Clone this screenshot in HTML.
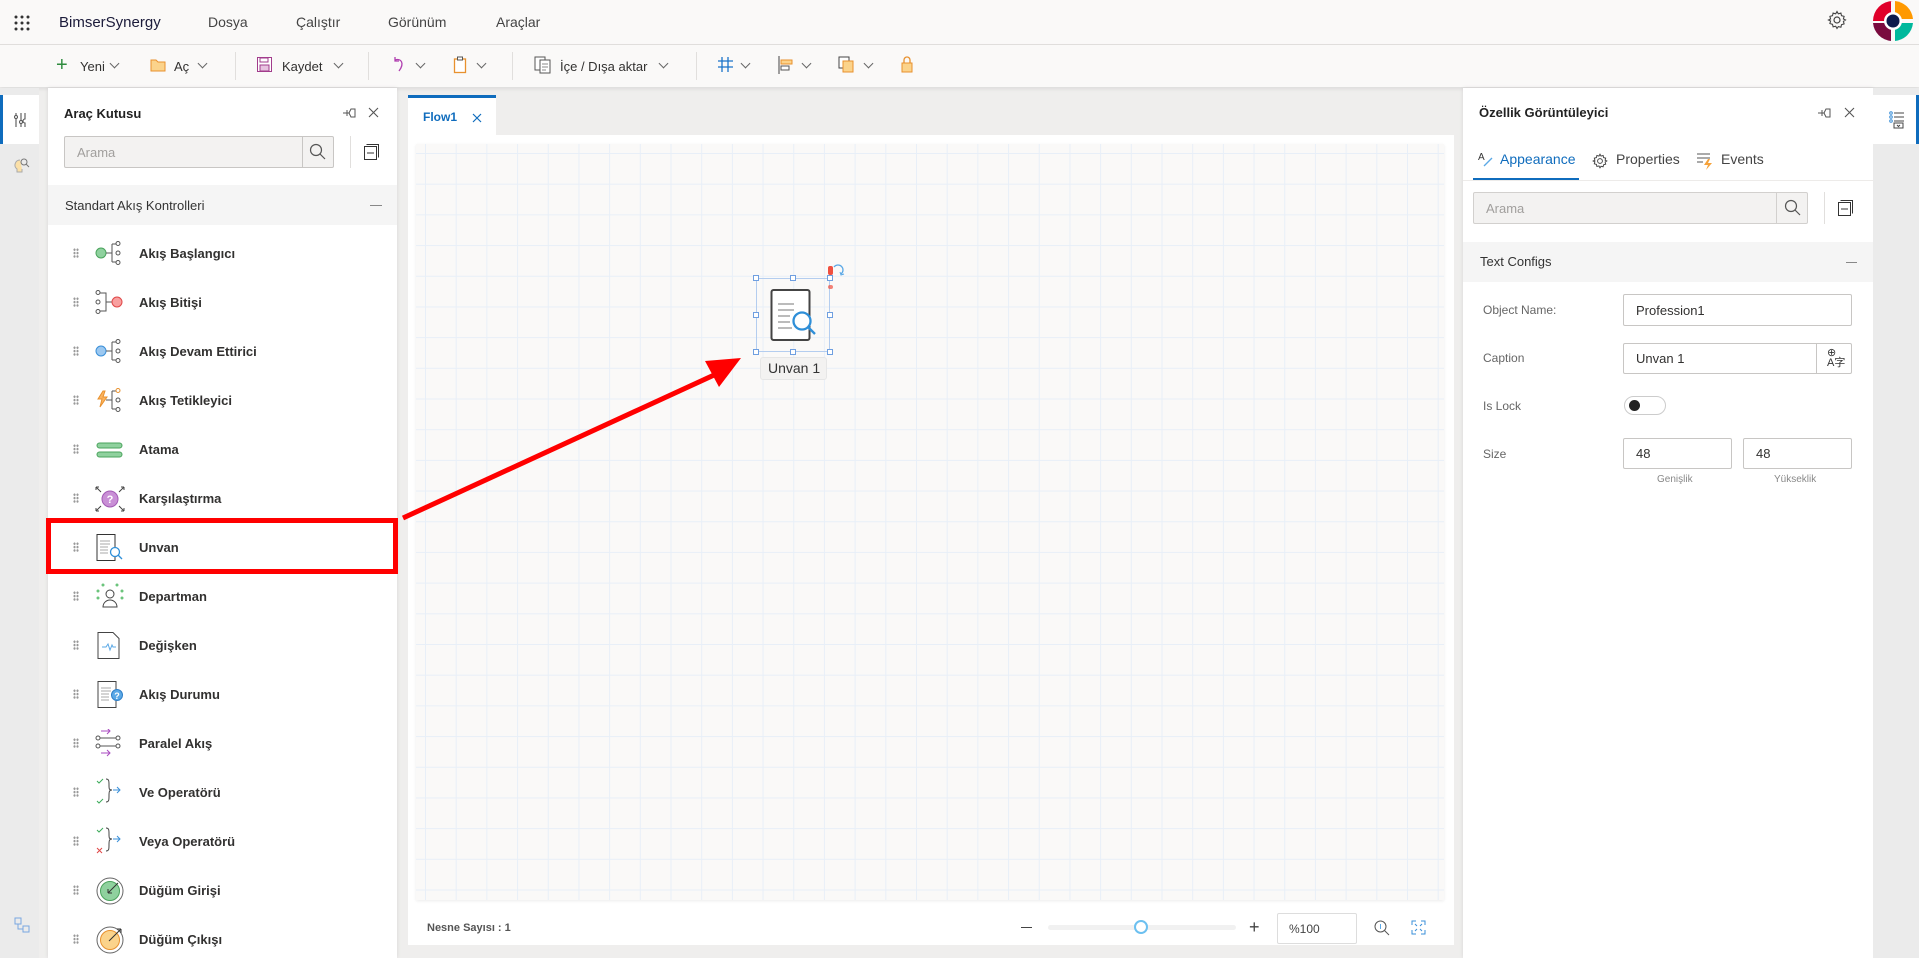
<!DOCTYPE html>
<html><head><meta charset="utf-8"><style>
*{box-sizing:border-box;margin:0;padding:0}
body{width:1919px;height:958px;overflow:hidden;background:#efeeed;font-family:"Liberation Sans",sans-serif;font-size:13px;color:#323130;position:relative}
.abs{position:absolute}
.top{left:0;top:0;width:1919px;height:45px;background:#faf9f8;border-bottom:1px solid #e1dfdd}
.tb{left:0;top:45px;width:1919px;height:42px;background:#faf9f8;box-shadow:0 2px 4px rgba(0,0,0,.08)}
.t{position:absolute;white-space:nowrap}
.sep{position:absolute;top:52px;width:1px;height:28px;background:#e1dfdd}
.chev{position:absolute;width:7px;height:7px;border-right:1px solid #666;border-bottom:1px solid #666;transform:rotate(45deg)}
.panel{background:#fff}
.row .dr{position:absolute;left:73px;width:6px;height:10px;background-image:radial-gradient(circle,#999 1px,transparent 1.3px);background-size:3px 3.4px}
.lbl{font-weight:bold;font-size:13px;color:#323130}
.inp{position:absolute;border:1px solid #c8c6c4;border-radius:2px;background:#fff;font-size:13px;padding-left:12px;display:flex;align-items:center}
.grid{background-color:#faf9f8;background-image:linear-gradient(#e8eff8 1px,transparent 1px),linear-gradient(90deg,#e8eff8 1px,transparent 1px);background-size:30.7px 30.7px;background-position:9px 9px}
</style></head><body>
<div class="abs top"></div>
<svg class="abs" style="left:14px;top:15px" width="16" height="16"><g fill="#333"><circle cx="2" cy="2" r="1.5"/><circle cx="8" cy="2" r="1.5"/><circle cx="14" cy="2" r="1.5"/><circle cx="2" cy="8" r="1.5"/><circle cx="8" cy="8" r="1.5"/><circle cx="14" cy="8" r="1.5"/><circle cx="2" cy="14" r="1.5"/><circle cx="8" cy="14" r="1.5"/><circle cx="14" cy="14" r="1.5"/></g></svg>
<div class="t" style="left:59px;top:14px;font-size:15px;color:#1b1b3a">BimserSynergy</div>
<div class="t" style="left:208px;top:14px;font-size:14px;color:#444">Dosya</div>
<div class="t" style="left:296px;top:14px;font-size:14px;color:#444">Çalıştır</div>
<div class="t" style="left:388px;top:14px;font-size:14px;color:#444">Görünüm</div>
<div class="t" style="left:496px;top:14px;font-size:14px;color:#444">Araçlar</div>
<svg class="abs" style="left:1827px;top:10px" width="20" height="20" viewBox="0 0 20 20"><circle cx="10" cy="10" r="3" fill="none" stroke="#444" stroke-width="1.2"/><path d="M10 1.5l1.3 2.3 2.6-.7.6 2.6 2.6.7-.7 2.6 2.1 1-2.1 1.4.7 2.5-2.6.8-.6 2.5-2.6-.6L10 18.5l-1.3-2.3-2.6.6-.6-2.5-2.6-.8.7-2.5L1.5 10l2.1-1-.7-2.6 2.6-.7.6-2.6 2.6.7z" fill="none" stroke="#444" stroke-width="1.1"/></svg>
<svg class="abs" style="left:1872px;top:0" width="42" height="42" viewBox="0 0 42 42"><path d="M21 1A20 20 0 0 0 1 21h18V1z" fill="#e0002a"/><path d="M23 1v18h18A20 20 0 0 0 23 1z" fill="#ff9900"/><path d="M1 23a20 20 0 0 0 18 18V23z" fill="#7a0b3f"/><path d="M23 23v18a20 20 0 0 0 18-18z" fill="#00b89c"/><circle cx="21" cy="21" r="9" fill="#fff"/><circle cx="21" cy="21" r="6.5" fill="#0d1b4c"/></svg>
<div class="abs tb"></div>
<div class="t" style="left:56px;top:54px;font-size:20px;color:#2e8b3e;font-weight:300">+</div>
<div class="t" style="left:80px;top:59px;font-size:13px">Yeni</div><div class="chev" style="left:111px;top:60px"></div>
<svg class="abs" style="left:150px;top:57px" width="16" height="15"><path d="M1 3h5l2 2h7v9H1z" fill="#fbd38b" stroke="#e8912e"/></svg>
<div class="t" style="left:174px;top:59px">Aç</div><div class="chev" style="left:199px;top:60px"></div>
<div class="sep" style="left:235px"></div>
<svg class="abs" style="left:257px;top:57px" width="15" height="15"><rect x=".5" y=".5" width="14" height="14" fill="#fff" stroke="#a23c8c"/><rect x="3" y="8" width="9" height="6" fill="#e7c3e0" stroke="#a23c8c"/><rect x="3" y="1" width="8" height="4" fill="none" stroke="#a23c8c"/></svg>
<div class="t" style="left:282px;top:59px">Kaydet</div><div class="chev" style="left:335px;top:60px"></div>
<div class="sep" style="left:368px"></div>
<svg class="abs" style="left:392px;top:56px" width="14" height="18"><path d="M3 4c6-2 10 3 4 11" fill="none" stroke="#b03fb0" stroke-width="1.3"/><path d="M3 1v4h4" fill="none" stroke="#b03fb0" stroke-width="1.3"/></svg>
<div class="chev" style="left:417px;top:60px"></div>
<svg class="abs" style="left:453px;top:56px" width="14" height="18"><rect x="1.5" y="3" width="11" height="13.5" fill="#fff" stroke="#e8912e" stroke-width="1.3"/><rect x="4.5" y="1" width="5" height="3" fill="#fff" stroke="#555"/></svg>
<div class="chev" style="left:478px;top:60px"></div>
<div class="sep" style="left:512px"></div>
<svg class="abs" style="left:534px;top:56px" width="17" height="18"><rect x="1" y="1" width="10" height="13" fill="#fff" stroke="#555"/><rect x="6" y="4" width="10" height="13" fill="#fff" stroke="#555"/><path d="M8 8h6M8 11h6M8 14h4" stroke="#888"/></svg>
<div class="t" style="left:560px;top:59px">İçe / Dışa aktar</div><div class="chev" style="left:660px;top:60px"></div>
<div class="sep" style="left:696px"></div>
<svg class="abs" style="left:718px;top:57px" width="15" height="15"><path d="M4 0v15M10 0v15M0 4h15M0 10h15" stroke="#1a73c9" stroke-width="1.3"/></svg>
<div class="chev" style="left:742px;top:60px"></div>
<svg class="abs" style="left:778px;top:56px" width="16" height="18"><path d="M1 0v18" stroke="#444"/><rect x="3" y="4" width="11" height="4" fill="#fbd38b" stroke="#e8912e"/><rect x="3" y="10" width="8" height="4" fill="#fff" stroke="#555"/></svg>
<div class="chev" style="left:803px;top:60px"></div>
<svg class="abs" style="left:838px;top:56px" width="17" height="18"><rect x="1" y="1" width="10" height="11" fill="#fff" stroke="#444"/><rect x="5" y="5" width="10" height="11" fill="#fbd38b" stroke="#e8912e"/></svg>
<div class="chev" style="left:865px;top:60px"></div>
<svg class="abs" style="left:901px;top:55px" width="12" height="18"><path d="M3 8V5a3 3 0 0 1 6 0v3" fill="none" stroke="#e8912e" stroke-width="1.3"/><rect x="1" y="8" width="10" height="9" fill="#fbd38b" stroke="#e8912e"/></svg>

<div class="abs" style="left:0;top:88px;width:39px;height:870px;background:#ebebeb"></div>
<div class="abs" style="left:0;top:95px;width:39px;height:49px;background:#fff;border-left:3px solid #0f6cbd"></div>
<svg class="abs" style="left:14px;top:112px" width="14" height="16"><path d="M2 1v14M7 1v14M11 1v6a2 2 0 0 0 0 4v4" fill="none" stroke="#555" stroke-width="1.1"/><circle cx="2" cy="5" r="1.5" fill="#fff" stroke="#555"/><circle cx="7" cy="10" r="1.5" fill="#fff" stroke="#555"/></svg>
<svg class="abs" style="left:14px;top:157px" width="16" height="18"><path d="M6 3a5 5 0 0 0-3 9v3h5v-3" fill="#fbe0a8" stroke="#aaa"/><circle cx="10" cy="5" r="3" fill="none" stroke="#777"/><path d="M12 7l3 3" stroke="#777"/></svg>
<svg class="abs" style="left:14px;top:917px" width="16" height="16"><rect x="1" y="1" width="6" height="6" fill="none" stroke="#7aa7e0"/><rect x="9" y="9" width="6" height="6" fill="none" stroke="#7aa7e0"/><path d="M4 7v5h5" fill="none" stroke="#7aa7e0"/></svg>

<div class="abs panel" style="left:48px;top:88px;width:349px;height:870px;box-shadow:0 0 4px rgba(0,0,0,.1)"></div>
<div class="t" style="left:64px;top:106px;font-size:13px;font-weight:600;color:#222">Araç Kutusu</div>
<svg class="abs" style="left:343px;top:107px" width="14" height="12"><path d="M0 6h4M4 3v6M4 6h2l2-4h4v8H8L6 6" fill="none" stroke="#555"/></svg>
<svg class="abs" style="left:368px;top:107px" width="11" height="11"><path d="M1 1l9 9M10 1l-9 9" stroke="#555" stroke-width="1.1"/></svg>
<div class="inp" style="left:64px;top:136px;width:270px;height:32px;background:#f3f2f1;color:#a19f9d">Arama</div>
<div class="abs" style="left:302px;top:136px;width:1px;height:32px;background:#c8c6c4"></div>
<svg class="abs" style="left:309px;top:143px" width="17" height="17"><circle cx="7" cy="7" r="5.5" fill="none" stroke="#555" stroke-width="1.2"/><path d="M11 11l5 5" stroke="#555" stroke-width="1.2"/></svg>
<div class="abs" style="left:350px;top:136px;width:1px;height:32px;background:#e1dfdd"></div>
<svg class="abs" style="left:364px;top:144px" width="15" height="16"><rect x=".5" y="2.5" width="12" height="13" fill="none" stroke="#333"/><path d="M2.5 .5h12v13" fill="none" stroke="#333"/><path d="M3 9h7" stroke="#333"/></svg>
<div class="abs" style="left:48px;top:185px;width:349px;height:40px;background:#f5f5f5"></div>
<div class="t" style="left:65px;top:198px;font-size:13px;color:#333">Standart Akış Kontrolleri</div>
<div class="abs" style="left:370px;top:205px;width:12px;height:1px;background:#888"></div>

<div class="row">
<div class="dr" style="top:248px"></div><div class="dr" style="top:297px"></div><div class="dr" style="top:346px"></div><div class="dr" style="top:395px"></div><div class="dr" style="top:444px"></div><div class="dr" style="top:493px"></div><div class="dr" style="top:542px"></div><div class="dr" style="top:591px"></div><div class="dr" style="top:640px"></div><div class="dr" style="top:689px"></div><div class="dr" style="top:738px"></div><div class="dr" style="top:787px"></div><div class="dr" style="top:836px"></div><div class="dr" style="top:885px"></div><div class="dr" style="top:934px"></div>
</div>
<div class="t lbl" style="left:139px;top:246px">Akış Başlangıcı</div>
<div class="t lbl" style="left:139px;top:295px">Akış Bitişi</div>
<div class="t lbl" style="left:139px;top:344px">Akış Devam Ettirici</div>
<div class="t lbl" style="left:139px;top:393px">Akış Tetikleyici</div>
<div class="t lbl" style="left:139px;top:442px">Atama</div>
<div class="t lbl" style="left:139px;top:491px">Karşılaştırma</div>
<div class="t lbl" style="left:139px;top:540px">Unvan</div>
<div class="t lbl" style="left:139px;top:589px">Departman</div>
<div class="t lbl" style="left:139px;top:638px">Değişken</div>
<div class="t lbl" style="left:139px;top:687px">Akış Durumu</div>
<div class="t lbl" style="left:139px;top:736px">Paralel Akış</div>
<div class="t lbl" style="left:139px;top:785px">Ve Operatörü</div>
<div class="t lbl" style="left:139px;top:834px">Veya Operatörü</div>
<div class="t lbl" style="left:139px;top:883px">Düğüm Girişi</div>
<div class="t lbl" style="left:139px;top:932px">Düğüm Çıkışı</div>
<svg class="abs" style="left:94px;top:240px" width="32" height="32" viewBox="0 0 32 32" fill="none" stroke="#555" stroke-width="1">
<circle cx="7" cy="13" r="5" fill="#8fd19e" stroke="#4aa35c"/><path d="M12 13h6M18 13V4M18 13v9" /><circle cx="24" cy="3.5" r="2"/><circle cx="24" cy="13" r="2"/><circle cx="24" cy="22.5" r="2"/><path d="M18 4h4M18 22h4"/></svg>
<svg class="abs" style="left:94px;top:289px" width="32" height="32" viewBox="0 0 32 32" fill="none" stroke="#555"><circle cx="4" cy="3.5" r="2"/><circle cx="4" cy="13" r="2"/><circle cx="4" cy="22.5" r="2"/><path d="M6 4h6v18H6M12 13h6"/><circle cx="23" cy="13" r="5" fill="#f8a0a0" stroke="#e04848"/></svg>
<svg class="abs" style="left:94px;top:338px" width="32" height="32" viewBox="0 0 32 32" fill="none" stroke="#555"><circle cx="7" cy="13" r="5" fill="#9cc8f0" stroke="#3a8fd8"/><path d="M12 13h6M18 4v18M18 4h4M18 22h4"/><circle cx="24" cy="3.5" r="2"/><circle cx="24" cy="13" r="2"/><circle cx="24" cy="22.5" r="2"/></svg>
<svg class="abs" style="left:94px;top:387px" width="32" height="32" viewBox="0 0 32 32" fill="none" stroke="#555"><path d="M9 4l-5 8h4l-2 8 7-10H9l2-6z" fill="#fbb35e" stroke="#e8912e"/><path d="M12 13h6M18 4v18M18 4h4M18 22h4"/><circle cx="24" cy="3.5" r="2" stroke="#e8912e"/><circle cx="24" cy="13" r="2"/><circle cx="24" cy="22.5" r="2"/></svg>
<svg class="abs" style="left:94px;top:436px" width="32" height="32" viewBox="0 0 32 32"><rect x="3" y="7" width="25" height="5" rx="2.5" fill="#8fd19e" stroke="#4aa35c"/><rect x="3" y="16" width="25" height="5" rx="2.5" fill="#8fd19e" stroke="#4aa35c"/></svg>
<svg class="abs" style="left:94px;top:485px" width="32" height="32" viewBox="0 0 32 32" fill="none" stroke="#444"><circle cx="16" cy="14" r="8" fill="#c98fd6" stroke="#a25ab5"/><text x="16" y="18" font-size="11" fill="#fff" stroke="none" text-anchor="middle" font-weight="bold" font-family="Liberation Sans">?</text><path d="M2 2l5 5M2 2h3M2 2v3M30 2l-5 5M30 2h-3M30 2v3M2 26l5-5M2 26h3M2 26v-3M30 26l-5-5M30 26h-3M30 26v-3"/></svg>
<svg class="abs" style="left:94px;top:533px" width="32" height="32" viewBox="0 0 32 32" fill="none"><path d="M3 1.5h18v26H3z" fill="#fff" stroke="#333"/><path d="M6 8h10M6 11h10M6 14h8M6 17h8M6 20h8" stroke="#aaa"/><circle cx="21" cy="19" r="4.5" fill="#fff" stroke="#2f8fd8" stroke-width="1.3"/><path d="M24 22l4 4" stroke="#2f8fd8" stroke-width="1.3"/></svg>
<svg class="abs" style="left:94px;top:582px" width="32" height="32" viewBox="0 0 32 32" fill="none"><circle cx="16" cy="12" r="4" stroke="#444"/><path d="M9 25a7 7 0 0 1 14 0z" stroke="#444"/><g fill="#6bc47c"><circle cx="9" cy="3" r="1.5"/><circle cx="23" cy="3" r="1.5"/><circle cx="4" cy="9" r="1.5"/><circle cx="28" cy="9" r="1.5"/><circle cx="4" cy="16" r="1.5"/><circle cx="28" cy="16" r="1.5"/></g></svg>
<svg class="abs" style="left:94px;top:631px" width="32" height="32" viewBox="0 0 32 32" fill="none"><path d="M4 1.5h15l6 6v20H4z" fill="#fff" stroke="#444"/><path d="M8 16h4l2-3 2 6 2-5 1 2h3" stroke="#5aa8e6"/></svg>
<svg class="abs" style="left:94px;top:680px" width="32" height="32" viewBox="0 0 32 32" fill="none"><path d="M4 1.5h18v26H4z" fill="#fff" stroke="#444"/><path d="M7 8h10M7 11h10M7 14h8M7 17h8M7 20h8" stroke="#aaa"/><circle cx="23" cy="15" r="5.5" fill="#5aa8e6" stroke="#2f7fc8"/><text x="23" y="19" font-size="9" fill="#fff" text-anchor="middle" font-weight="bold" font-family="Liberation Sans">?</text></svg>
<svg class="abs" style="left:94px;top:729px" width="32" height="32" viewBox="0 0 32 32" fill="none"><path d="M7 2h9M13 -1l3 3-3 3M7 24h9M13 21l3 3-3 3" stroke="#a94ac0"/><circle cx="4" cy="9" r="2" stroke="#555"/><circle cx="24" cy="9" r="2" stroke="#555"/><circle cx="4" cy="17" r="2" stroke="#555"/><circle cx="24" cy="17" r="2" stroke="#555"/><path d="M6 9h16M6 17h16" stroke="#555"/></svg>
<svg class="abs" style="left:94px;top:778px" width="32" height="32" viewBox="0 0 32 32" fill="none"><path d="M3 3l2 2 4-4M3 23l2 2 4-4" stroke="#3cab5a"/><path d="M12 1c3 0 3 2 3 6s0 5 3 5c-3 0-3 2-3 6s0 6-3 6" stroke="#444"/><path d="M19 12h7M23 9l3 3-3 3" stroke="#3a8fd8"/></svg>
<svg class="abs" style="left:94px;top:827px" width="32" height="32" viewBox="0 0 32 32" fill="none"><path d="M3 3l2 2 4-4" stroke="#3cab5a"/><path d="M3 21l5 5M8 21l-5 5" stroke="#e04848"/><path d="M12 1c3 0 3 2 3 6s0 5 3 5c-3 0-3 2-3 6s0 6-3 6" stroke="#444"/><path d="M19 12h7M23 9l3 3-3 3" stroke="#3a8fd8"/></svg>
<svg class="abs" style="left:94px;top:876px" width="32" height="32" viewBox="0 0 32 32" fill="none"><circle cx="16" cy="15" r="13" fill="#fff" stroke="#666"/><circle cx="16" cy="15" r="9.5" fill="#8fd19e" stroke="#4aa35c"/><path d="M14 17l10-10M14 17v-4M14 17h4" stroke="#333"/></svg>
<svg class="abs" style="left:94px;top:925px" width="32" height="32" viewBox="0 0 32 32" fill="none"><circle cx="16" cy="15" r="13" fill="#fff" stroke="#666"/><circle cx="16" cy="15" r="9.5" fill="#fbd38b" stroke="#e8912e"/><path d="M15 16l12-12M27 4h-4M27 4v4" stroke="#333"/></svg>
<div class="abs" style="left:46px;top:518px;width:352px;height:56px;border:5px solid #f00"></div>

<div class="abs" style="left:408px;top:95px;width:88px;height:40px;background:#fff;border-top:3px solid #0f6cbd"></div>
<div class="t" style="left:423px;top:110px;font-size:12px;font-weight:bold;color:#0f6cbd">Flow1</div>
<svg class="abs" style="left:472px;top:113px" width="10" height="10"><path d="M1 1l8 8M9 1l-8 8" stroke="#0f6cbd" stroke-width="1.2"/></svg>
<div class="abs" style="left:408px;top:135px;width:1046px;height:773px;background:#fff"></div>
<div class="abs grid" style="left:416px;top:144px;width:1028px;height:756px;box-shadow:0 1px 3px rgba(0,0,0,.08)"></div>
<div class="abs" style="left:408px;top:908px;width:1046px;height:37px;background:#fff"></div>
<div class="t" style="left:427px;top:922px;font-size:11px;font-weight:bold;color:#555">Nesne Sayısı : 1</div>
<div class="abs" style="left:1021px;top:927px;width:11px;height:1px;background:#444"></div>
<div class="abs" style="left:1048px;top:925px;width:188px;height:5px;background:#f1f1f1;border-radius:3px"></div>
<div class="abs" style="left:1134px;top:920px;width:14px;height:14px;border:2px solid #6cc0f0;border-radius:50%;background:#fff"></div>
<div class="t" style="left:1249px;top:917px;font-size:18px;color:#444;font-weight:300">+</div>
<div class="inp" style="left:1277px;top:913px;width:80px;height:31px;border-color:#ddd;padding-left:11px;color:#444;font-size:12px">%100</div>
<svg class="abs" style="left:1374px;top:920px" width="16" height="16"><circle cx="6.5" cy="6.5" r="5.5" fill="none" stroke="#555"/><path d="M10.5 10.5l4.5 4.5" stroke="#555"/><path d="M6.5 4v5" stroke="#5aa8e6"/></svg>
<svg class="abs" style="left:1411px;top:920px" width="15" height="15" fill="none" stroke="#3a8fd8"><path d="M1 5V1h4M10 1h4v4M14 10v4h-4M5 14H1v-4"/><path d="M4 4l2 2M11 4l-2 2M4 11l2-2M11 11l-2-2"/></svg>
<div class="abs" style="left:756px;top:278px;width:74px;height:74px;border:1px solid #b4cdef"></div>
<div class="abs" style="left:753px;top:275px;width:6px;height:6px;border:1px solid #6f9fe0;background:#fff"></div>
<div class="abs" style="left:790px;top:275px;width:6px;height:6px;border:1px solid #6f9fe0;background:#fff"></div>
<div class="abs" style="left:827px;top:275px;width:6px;height:6px;border:1px solid #6f9fe0;background:#fff"></div>
<div class="abs" style="left:753px;top:312px;width:6px;height:6px;border:1px solid #6f9fe0;background:#fff"></div>
<div class="abs" style="left:827px;top:312px;width:6px;height:6px;border:1px solid #6f9fe0;background:#fff"></div>
<div class="abs" style="left:753px;top:349px;width:6px;height:6px;border:1px solid #6f9fe0;background:#fff"></div>
<div class="abs" style="left:790px;top:349px;width:6px;height:6px;border:1px solid #6f9fe0;background:#fff"></div>
<div class="abs" style="left:827px;top:349px;width:6px;height:6px;border:1px solid #6f9fe0;background:#fff"></div>
<div class="abs" style="left:828px;top:266px;width:5px;height:9px;background:#f05040;border-radius:2px"></div>
<div class="abs" style="left:828px;top:285px;width:5px;height:4px;background:#f05040;border-radius:2px;opacity:.7"></div>
<svg class="abs" style="left:831px;top:264px" width="14" height="13"><path d="M3 3a5 5 0 1 1 7 7" fill="none" stroke="#5aa8e6" stroke-width="1.3"/><path d="M9 8l1 3 3-1" fill="none" stroke="#5aa8e6"/></svg>
<svg class="abs" style="left:770px;top:289px" width="54" height="54" viewBox="0 0 54 54" fill="none"><rect x="1.5" y="1" width="38" height="50" rx="2" fill="#fff" stroke="#444" stroke-width="2"/><path d="M8 15h16M8 21h16M8 27h12M8 33h12M8 39h14" stroke="#bbb" stroke-width="2"/><circle cx="32" cy="32" r="8.5" fill="#fff" stroke="#2f8fd8" stroke-width="2.3"/><path d="M38 38l7 7" stroke="#2f8fd8" stroke-width="2.3"/></svg>
<div class="abs" style="left:760px;top:357px;width:67px;height:23px;background:#f3f2f1;border-radius:3px;border:1px solid #e6e6e6"></div>
<div class="t" style="left:768px;top:360px;font-size:14px;color:#333">Unvan 1</div>
<svg class="abs" style="left:395px;top:340px" width="360" height="190"><path d="M8 178L330 30" stroke="#f00" stroke-width="5"/><path d="M346 18l-36 3 14 26z" fill="#f00"/></svg>

<div class="abs panel" style="left:1463px;top:88px;width:410px;height:870px;box-shadow:0 0 4px rgba(0,0,0,.1)"></div>
<div class="t" style="left:1479px;top:105px;font-size:13px;font-weight:600;color:#222">Özellik Görüntüleyici</div>
<svg class="abs" style="left:1818px;top:107px" width="14" height="12"><path d="M0 6h4M4 3v6M4 6h2l2-4h4v8H8L6 6" fill="none" stroke="#555"/></svg>
<svg class="abs" style="left:1844px;top:107px" width="11" height="11"><path d="M1 1l9 9M10 1l-9 9" stroke="#555" stroke-width="1.1"/></svg>
<div class="t" style="left:1478px;top:152px;font-size:10px;color:#333">A</div>
<svg class="abs" style="left:1480px;top:155px" width="14" height="12"><path d="M4 11l8-8" stroke="#5aa8e6" stroke-width="1.3"/></svg>
<div class="t" style="left:1500px;top:151px;font-size:14px;color:#0f6cbd">Appearance</div>
<div class="abs" style="left:1473px;top:178px;width:106px;height:3px;background:#0f6cbd"></div>
<div class="abs" style="left:1463px;top:180px;width:410px;height:1px;background:#edebe9"></div>
<svg class="abs" style="left:1592px;top:153px" width="16" height="16" viewBox="0 0 20 20"><circle cx="10" cy="10" r="3" fill="none" stroke="#444" stroke-width="1.2"/><path d="M10 1.5l1.3 2.3 2.6-.7.6 2.6 2.6.7-.7 2.6 2.1 1-2.1 1.4.7 2.5-2.6.8-.6 2.5-2.6-.6L10 18.5l-1.3-2.3-2.6.6-.6-2.5-2.6-.8.7-2.5L1.5 10l2.1-1-.7-2.6 2.6-.7.6-2.6 2.6.7z" fill="none" stroke="#444" stroke-width="1.2"/></svg>
<div class="t" style="left:1616px;top:151px;font-size:14px;color:#444">Properties</div>
<svg class="abs" style="left:1696px;top:152px" width="18" height="18"><path d="M1 2h13M1 6h13M1 10h6" stroke="#555"/><path d="M12 7l-4 6h4l-2 5 6-7h-4l2-4z" fill="#f6a23a"/></svg>
<div class="t" style="left:1721px;top:151px;font-size:14px;color:#444">Events</div>
<div class="inp" style="left:1473px;top:192px;width:335px;height:32px;background:#f3f2f1;color:#a19f9d;border-color:#d2d0ce">Arama</div>
<div class="abs" style="left:1776px;top:192px;width:1px;height:32px;background:#d2d0ce"></div>
<svg class="abs" style="left:1784px;top:199px" width="17" height="17"><circle cx="7" cy="7" r="5.5" fill="none" stroke="#555" stroke-width="1.2"/><path d="M11 11l5 5" stroke="#555" stroke-width="1.2"/></svg>
<div class="abs" style="left:1824px;top:192px;width:1px;height:32px;background:#e1dfdd"></div>
<svg class="abs" style="left:1838px;top:200px" width="15" height="16"><rect x=".5" y="2.5" width="12" height="13" fill="none" stroke="#333"/><path d="M2.5 .5h12v13" fill="none" stroke="#333"/><path d="M3 9h7" stroke="#333"/></svg>
<div class="abs" style="left:1463px;top:242px;width:410px;height:40px;background:#f5f5f5"></div>
<div class="t" style="left:1480px;top:254px;font-size:13px;color:#333">Text Configs</div>
<div class="abs" style="left:1846px;top:262px;width:11px;height:1px;background:#888"></div>
<div class="t" style="left:1483px;top:303px;font-size:12px;color:#666">Object Name:</div>
<div class="inp" style="left:1623px;top:294px;width:229px;height:32px">Profession1</div>
<div class="t" style="left:1483px;top:351px;font-size:12px;color:#666">Caption</div>
<div class="inp" style="left:1623px;top:343px;width:229px;height:31px">Unvan 1</div>
<div class="abs" style="left:1816px;top:343px;width:1px;height:31px;background:#c8c6c4"></div>
<div class="t" style="left:1827px;top:348px;font-size:11px;color:#333;line-height:10px">⊕<br>A字</div>
<div class="t" style="left:1483px;top:399px;font-size:12px;color:#666">Is Lock</div>
<div class="abs" style="left:1624px;top:396px;width:42px;height:19px;border:1px solid #ccc;border-radius:10px;background:#fff"></div>
<div class="abs" style="left:1629px;top:400px;width:11px;height:11px;border-radius:50%;background:#222"></div>
<div class="t" style="left:1483px;top:447px;font-size:12px;color:#666">Size</div>
<div class="inp" style="left:1623px;top:438px;width:109px;height:31px">48</div>
<div class="inp" style="left:1743px;top:438px;width:109px;height:31px">48</div>
<div class="t" style="left:1657px;top:474px;font-size:10px;color:#888">Genişlik</div>
<div class="t" style="left:1774px;top:474px;font-size:10px;color:#888">Yükseklik</div>
<div class="abs" style="left:1873px;top:88px;width:46px;height:870px;background:#ebebeb"></div>
<div class="abs" style="left:1873px;top:95px;width:46px;height:49px;background:#fff;border-right:3px solid #0f6cbd"></div>
<svg class="abs" style="left:1889px;top:111px" width="16" height="18"><g fill="none" stroke="#3a8fd8"><circle cx="2" cy="2" r="1.3"/><circle cx="2" cy="6" r="1.3"/><circle cx="2" cy="10" r="1.3"/></g><path d="M5 2h10M5 6h10M5 10h10" stroke="#444"/><rect x="5" y="12" width="9" height="5" fill="none" stroke="#444"/><path d="M8 14l1.5 1.5L11 14" stroke="#444" fill="none"/></svg>
</body></html>
